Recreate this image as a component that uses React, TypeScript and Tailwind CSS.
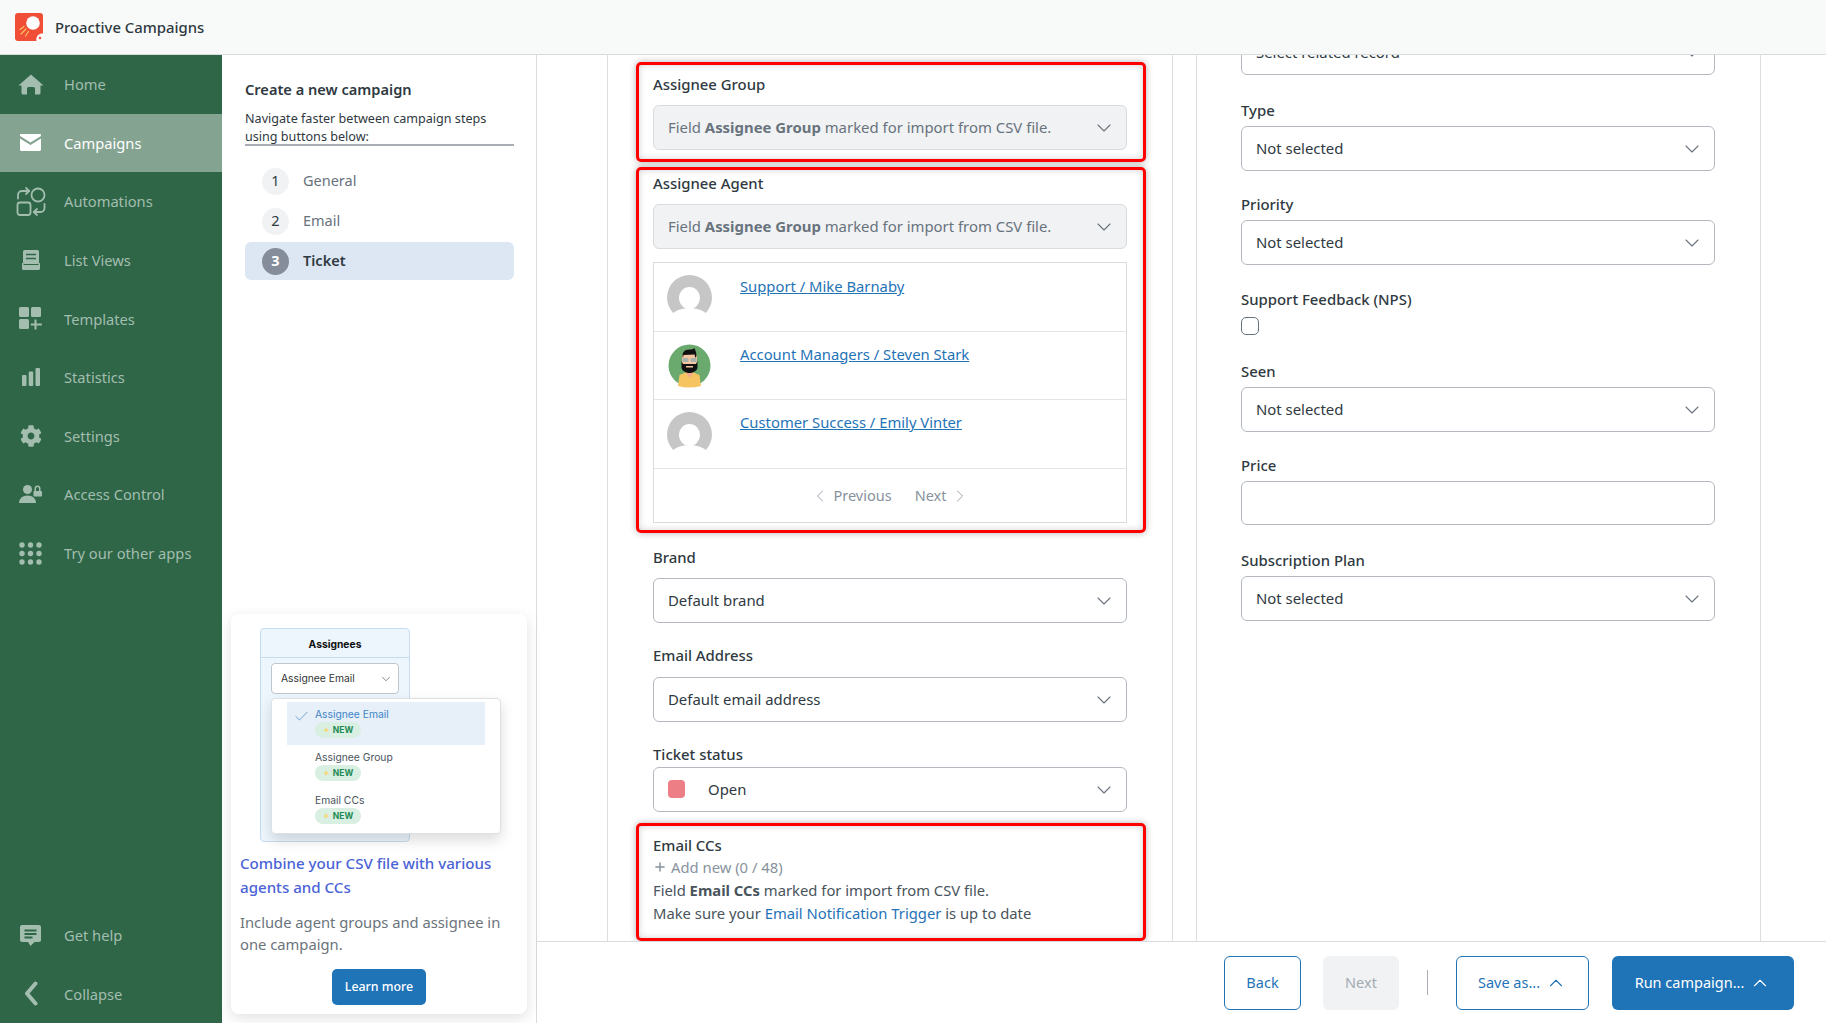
import type { ReactNode } from 'react'
import { ChevronDown, ChevronUp, ChevronLeft, ChevronRight, Check, Plus } from 'lucide-react'
import { FaCog } from 'react-icons/fa'

const HomeIcon = () => (
  <svg width="26" height="21" viewBox="0 0 26 21" fill="currentColor">
    <path d="M13 .5 25.5 11.5H22.5V19a1.5 1.5 0 0 1-1.5 1.5H17V14.5a1.5 1.5 0 0 0-1.5-1.5h-5A1.5 1.5 0 0 0 9 14.5v6H5A1.5 1.5 0 0 1 3.5 19v-7.5H.5z" />
  </svg>
)

const MailIcon = () => (
  <svg width="21" height="17" viewBox="0 0 21 17" fill="currentColor">
    <path d="M1 0h19c.6 0 1 .4 1 1v1l-10.500 6.500L0 2V1c0-.6.4-1 1-1z" />
    <path d="M0 4.500l10.500 6.500L21 4.500V15.500c0 .8-.7 1.500-1.500 1.500h-18C.7 17 0 16.300 0 15.500z" />
  </svg>
)

const AutomationIcon = () => (
  <svg width="30" height="29" viewBox="0 0 30 29" fill="none" stroke="currentColor" strokeWidth="1.800" strokeLinecap="round" strokeLinejoin="round">
    <circle cx="22" cy="8" r="6.500" />
    <rect x="1.500" y="15.500" width="13" height="12.500" rx="2.500" />
    <path d="M2 11.500V8a4 4 0 0 1 4-4h7" />
    <path d="M10 1l3.200 3L10 7" />
    <path d="M28.500 17v4a4 4 0 0 1-4 4H18" />
    <path d="M21 22l-3.200 3 3.200 3" />
  </svg>
)

const ListIcon = () => (
  <svg width="18" height="20" viewBox="0 0 18 20">
    <rect x="1" y="0" width="16" height="14" rx="1.500" fill="currentColor" />
    <path d="M4 4.500h10M4 8.500h10" stroke="#2e6647" strokeWidth="1.600" />
    <path d="M0 13h1.500v2h15v-2H18v5.500c0 .8-.7 1.500-1.500 1.500h-15C.7 20 0 19.300 0 18.500z" fill="currentColor" />
  </svg>
)

const TemplatesIcon = () => (
  <svg width="23" height="23" viewBox="0 0 23 23" fill="currentColor">
    <rect x="0" y="0" width="10" height="10" rx="1.500" />
    <rect x="12" y="0" width="10" height="10" rx="1.500" />
    <rect x="0" y="12" width="10" height="10" rx="1.500" />
    <path d="M16.500 12.500v10M11.800 17.500h11" stroke="currentColor" strokeWidth="2" />
  </svg>
)

const StatsIcon = () => (
  <svg width="18" height="18" viewBox="0 0 18 18" fill="currentColor">
    <rect x="0" y="7" width="4.500" height="11" rx="1" />
    <rect x="6.700" y="3.500" width="4.500" height="14.500" rx="1" />
    <rect x="13.500" y="0" width="4.500" height="18" rx="1" />
  </svg>
)

const AccessIcon = () => (
  <svg width="23" height="18" viewBox="0 0 23 18" fill="currentColor">
    <circle cx="8.500" cy="4.500" r="4.500" />
    <path d="M0 18c0-4.500 3.500-7.500 8.500-7.500s8.500 3 8.500 7.500z" />
    <path d="M15.500 6V3.500a3 3 0 0 1 6 0V6h.5c.6 0 1 .4 1 1v3.500c0 .6-.4 1-1 1h-6.500c-.6 0-1-.4-1-1V7c0-.6.4-1 1-1zM17 6h3V3.500a1.500 1.500 0 0 0-3 0z" fillRule="evenodd" />
  </svg>
)

const AppsIcon = () => (
  <svg width="23" height="23" viewBox="0 0 23 23" fill="currentColor">
    {[3, 11.500, 20].map((y) =>
      [3, 11.500, 20].map((x) => <circle key={`${x}-${y}`} cx={x} cy={y} r="2.700" />),
    )}
  </svg>
)

const HelpIcon = () => (
  <svg width="21" height="21" viewBox="0 0 21 21" fill="currentColor">
    <path d="M2 0h17c1.100 0 2 .9 2 2v13c0 1.100-.9 2-2 2h-4.500L10.500 21 8 17H2c-1.100 0-2-.9-2-2V2C0 .9.900 0 2 0z" />
    <path d="M4.500 5.500h12M4.500 9h12M4.500 12.500h8" stroke="#2e6647" strokeWidth="1.800" />
  </svg>
)

const CollapseIcon = () => (
  <svg width="14" height="25" viewBox="0 0 14 25" fill="none" stroke="currentColor" strokeWidth="4" strokeLinecap="round" strokeLinejoin="round">
    <path d="M11.500 2.500 3 12.500l8.500 10" />
  </svg>
)

const Logo = () => (
  <svg width="28" height="28" viewBox="0 0 28 28">
    <rect width="28" height="28" rx="3" fill="#f04e37" />
    <circle cx="18" cy="10" r="6.800" fill="#fff" />
    <path d="M5 16.500l4-3M6 21l5-5M10.500 23l3-4.500" stroke="#f8c35c" strokeWidth="1.200" strokeLinecap="round" />
    <path d="M28 20.500a6 6 0 0 0-6.500 7.500H27a1 1 0 0 0 1-1z" fill="#fff" />
    <circle cx="25" cy="25" r="1.300" fill="#f04e37" />
  </svg>
)

const BlankAvatar = () => (
  <svg width="45" height="45" viewBox="0 0 45 45" className="shrink-0">
    <circle cx="22.500" cy="22.500" r="22.500" fill="#c6c6c6" />
    <ellipse cx="22.500" cy="23" rx="10.500" ry="11" fill="#fff" />
    <ellipse cx="22.500" cy="45" rx="20" ry="12" fill="#fff" />
  </svg>
)

const StevenAvatar = () => (
  <svg width="45" height="45" viewBox="0 0 45 45" className="shrink-0">
    <circle cx="22.500" cy="22.500" r="21" fill="#6aaa6f" />
    <path d="M11 43 12.500 32l6-2.500h8l6 2.500 1.500 11q-6 1.500-12 1.500T11 43z" fill="#f6c561" />
    <path d="M18.500 29.500 22.500 35l4-5.500z" fill="#f3a88f" />
    <rect x="15" y="9" width="15" height="16" rx="5" fill="#f2c6a2" />
    <path d="M15.500 13c0-3 1-6.500 7-6.500 2 0 3.500-.5 5-1.500 0 1.500 2 3 2 8l-1 2-1-3.500-11 .5-.5 3z" fill="#111" />
    <path d="M14.500 18v6c0 3.500 4 6 8 6s8-2.500 8-6v-6l-1.500 3h-13z" fill="#111" />
    <rect x="15.500" y="15" width="6" height="4" rx="1" fill="#a9b3ad" />
    <rect x="23.500" y="15" width="6" height="4" rx="1" fill="#a9b3ad" />
    <rect x="19" y="23" width="7" height="1.500" fill="#f2c6a2" />
  </svg>
)

type NavItem = { label: string; icon: ReactNode; active?: boolean }

const topNav: NavItem[] = [
  { label: 'Home', icon: <HomeIcon /> },
  { label: 'Campaigns', icon: <MailIcon />, active: true },
  { label: 'Automations', icon: <AutomationIcon /> },
  { label: 'List Views', icon: <ListIcon /> },
  { label: 'Templates', icon: <TemplatesIcon /> },
  { label: 'Statistics', icon: <StatsIcon /> },
  { label: 'Settings', icon: <FaCog size={22} /> },
  { label: 'Access Control', icon: <AccessIcon /> },
  { label: 'Try our other apps', icon: <AppsIcon /> },
]

const bottomNav: NavItem[] = [
  { label: 'Get help', icon: <HelpIcon /> },
  { label: 'Collapse', icon: <CollapseIcon /> },
]

function NavRow({ item }: { item: NavItem }) {
  return (
    <div className={`flex h-[58.6px] items-center text-[14.7px] ${item.active ? 'bg-[#84a391] text-white' : 'text-[#a3bdaf]'}`}>
      <span className="ml-[15px] flex w-[31px] justify-center">{item.icon}</span>
      <span className="ml-[18px]">{item.label}</span>
    </div>
  )
}

function Sidebar() {
  return (
    <aside className="flex w-[222px] shrink-0 flex-col justify-between bg-[#2e6647]">
      <div>
        {topNav.map((item) => (
          <NavRow key={item.label} item={item} />
        ))}
      </div>
      <div>
        {bottomNav.map((item) => (
          <NavRow key={item.label} item={item} />
        ))}
      </div>
    </aside>
  )
}

function NewBadge() {
  return (
    <span className="flex h-[16px] w-[46px] items-center justify-center gap-[3px] rounded-full bg-[#d8efe2] text-[8.5px] font-bold text-[#1f8a55]">
      <span className="text-[8px] text-[#f6d77a]">✦</span>NEW
    </span>
  )
}

function MiniOption({ label, active }: { label: string; active?: boolean }) {
  return (
    <div className={`relative h-[43px] w-[198px] pl-[28px] pt-[5px] ${active ? 'bg-[#e7f0f9] text-[#3d85c6]' : 'text-[#49545c]'}`}>
      {active && <Check size={17} strokeWidth={1} className="absolute left-[6px] top-[6px] text-[#3d85c6]" />}
      <div className="mb-[1px] text-[10.3px] leading-[14px]">{label}</div>
      <NewBadge />
    </div>
  )
}

function PromoCard() {
  return (
    <div className="mb-[9px] ml-[9px] w-[296px] rounded-[8px] bg-white pb-[9px] pt-[14px] shadow-[0_4px_14px_rgba(0,0,0,0.12)]">
      <div className="relative ml-[29px] h-[214px] w-[150px] rounded-[4px] border border-[#c5dcf0] bg-[#edf6fd] font-['Inter',sans-serif]">
        <div className="flex h-[29px] items-center justify-center border-b border-[#c5dcf0] pt-[4px] text-[10.3px] font-bold text-[#111]">Assignees</div>
        <div className="mx-[10px] mt-[5px] flex h-[31px] items-center justify-between rounded-[4px] border border-[#c0c6cb] bg-white pl-[9px] pr-[5px] text-[10.3px] text-[#333]">
          Assignee Email
          <ChevronDown size={14} strokeWidth={1} />
        </div>
        <div className="absolute left-[10px] top-[69px] h-[136px] w-[230px] rounded-[4px] border border-[#dde1e4] bg-white pl-[15px] pt-[3px] shadow-[0_6px_14px_rgba(0,0,0,0.14)]">
          <MiniOption label="Assignee Email" active />
          <MiniOption label="Assignee Group" />
          <MiniOption label="Email CCs" />
        </div>
      </div>
      <div className="mt-[9px] px-[9px] text-[15.1px] font-medium leading-[24px] text-[#4a63d6]">Combine your CSV file with various agents and CCs</div>
      <div className="mt-[12px] px-[9px] text-[14.75px] leading-[22px] text-[#6b747c]">Include agent groups and assignee in one campaign.</div>
      <button className="mx-auto mt-[14px] block h-[36px] w-[94px] rounded-[5px] bg-[#1f73b7] text-[12.4px] font-medium text-white">Learn more</button>
    </div>
  )
}

function StepRow({ n, label, active }: { n: number; label: string; active?: boolean }) {
  return (
    <div className={`flex h-[38px] items-center gap-[14px] rounded-[6px] pl-[17px] text-[14.5px] ${active ? 'bg-[#dce7f3] font-semibold text-[#2f3941]' : 'text-[#68737d]'}`}>
      <span className={`flex h-[27px] w-[27px] items-center justify-center rounded-full ${active ? 'bg-[#858d9b] font-bold text-white' : 'bg-[#f1f2f4] text-[#2f3941]'}`}>{n}</span>
      {label}
    </div>
  )
}

function StepsPanel() {
  return (
    <div className="flex w-[315px] shrink-0 flex-col justify-between border-r border-[#d8dcde]">
      <div className="pl-[23px] pr-[22px] pt-[22px]">
        <h2 className="text-[14.6px] font-semibold leading-[24px] text-[#2f3941]">Create a new campaign</h2>
        <p className="mt-[9px] h-[36px] border-b-2 border-[#a9aeb6] text-[12.6px] leading-[18px] text-[#2f3941]">Navigate faster between campaign steps using buttons below:</p>
        <div className="mt-[16px] flex flex-col gap-[2px]">
          <StepRow n={1} label="General" />
          <StepRow n={2} label="Email" />
          <StepRow n={3} label="Ticket" active />
        </div>
      </div>
      <PromoCard />
    </div>
  )
}

function Select({ children, disabled, className = '' }: { children: ReactNode; disabled?: boolean; className?: string }) {
  return (
    <div className={`flex h-[45px] items-center justify-between rounded-[6px] border pl-[14px] pr-[10px] text-[14.9px] ${disabled ? 'border-[#d8dcde] bg-[#f1f2f4] text-[#68737d]' : 'border-[#b3b9bf] bg-white text-[#2f3941]'} ${className}`}>
      <span className="flex items-center">{children}</span>
      <ChevronDown size={24} strokeWidth={1.100} className="shrink-0 text-[#68737d]" />
    </div>
  )
}

function Label({ children, className = '' }: { children: ReactNode; className?: string }) {
  return <div className={`h-[20px] text-[14.9px] font-medium leading-[18px] text-[#2f3941] ${className}`}>{children}</div>
}

function RedBox({ children, className = '' }: { children: ReactNode; className?: string }) {
  return <div className={`rounded-[5px] border-[3px] border-[#f00] pl-[14px] pr-[16px] shadow-[0_0_7px_rgba(0,0,0,0.3),inset_0_0_7px_rgba(0,0,0,0.18)] ${className}`}>{children}</div>
}

function ImportSelect({ className = '' }: { className?: string }) {
  return (
    <Select disabled className={className}>
      <span>
        Field <b className="font-bold">Assignee Group</b> marked for import from CSV file.
      </span>
    </Select>
  )
}

function AgentRow({ label, avatar, top, linkTop }: { label: string; avatar: ReactNode; top: string; linkTop: string }) {
  return (
    <div className={`flex h-[68.500px] items-start border-b border-[#e2e4e6] pl-[13px] ${top}`}>
      {avatar}
      <a className={`ml-[28px] text-[14.8px] leading-[20px] text-[#1f73b7] underline ${linkTop}`}>{label}</a>
    </div>
  )
}

function LeftColumn() {
  return (
    <section className="h-full w-[566px] shrink-0 overflow-hidden border-x border-[#dcdfe1] pl-[28px] pr-[26px] pt-[7px]">
      <RedBox className="h-[100px] pt-[10px]">
        <Label>Assignee Group</Label>
        <ImportSelect className="mt-[10px] h-[44px]" />
      </RedBox>
      <RedBox className="mt-[5px] h-[366px] pt-[4px]">
        <Label>Assignee Agent</Label>
        <ImportSelect className="mt-[10px]" />
        <div className="mt-[13px] h-[261px] border border-[#d8dcde]">
          <AgentRow label="Support / Mike Barnaby" avatar={<BlankAvatar />} top="pt-[12px]" linkTop="mt-[1px]" />
          <AgentRow label="Account Managers / Steven Stark" avatar={<StevenAvatar />} top="pt-[11px]" linkTop="mt-[1px]" />
          <AgentRow label="Customer Success / Emily Vinter" avatar={<BlankAvatar />} top="pt-[12px]" linkTop="mt-0" />
          <div className="flex h-[54px] items-center justify-center text-[14.5px] text-[#87929d]">
            <ChevronLeft size={20} strokeWidth={1} className="mr-[4px]" />
            Previous
            <span className="ml-[23px]">Next</span>
            <ChevronRight size={20} strokeWidth={1} className="ml-[4px]" />
          </div>
        </div>
      </RedBox>
      <div className="pl-[17px] pr-[19px]">
        <Label className="mt-[15px]">Brand</Label>
        <Select className="mt-[10px]">Default brand</Select>
        <Label className="mt-[23px]">Email Address</Label>
        <Select className="mt-[11px]">Default email address</Select>
        <Label className="mt-[23px]">Ticket status</Label>
        <Select className="mt-[2px]">
          <span className="mr-[23px] h-[18px] w-[17px] rounded-[4px] bg-[#ee7e85]" />
          Open
        </Select>
      </div>
      <RedBox className="mt-[11px] h-[118px] pt-[10px] text-[14.8px] leading-[20px] text-[#49545c]">
        <Label>Email CCs</Label>
        <div className="mt-[1px] flex items-center text-[#87929d]">
          <Plus size={14} strokeWidth={2.5} className="mr-[4px]" />
          Add new (0 / 48)
        </div>
        <div className="mt-[3px]">
          Field <b className="font-bold">Email CCs</b> marked for import from CSV file.
        </div>
        <div className="mt-[3px]">
          Make sure your <span className="text-[#1f73b7]">Email Notification Trigger</span> is up to date
        </div>
      </RedBox>
    </section>
  )
}

function RightColumn() {
  return (
    <section className="h-full w-[565px] shrink-0 overflow-hidden border-x border-[#dcdfe1] pl-[44px] pr-[45px]">
      <Select className="-mt-[25px]">Select related record</Select>
      <Label className="mt-[26px]">Type</Label>
      <Select className="mt-[5px]">Not selected</Select>
      <Label className="mt-[24px]">Priority</Label>
      <Select className="mt-[5px]">Not selected</Select>
      <Label className="mt-[25px]">Support Feedback (NPS)</Label>
      <div className="mt-[7px] h-[18px] w-[18px] rounded-[5px] border border-[#68737d]" />
      <Label className="mt-[27px]">Seen</Label>
      <Select className="mt-[5px]">Not selected</Select>
      <Label className="mt-[24px]">Price</Label>
      <div className="mt-[5px] h-[44px] rounded-[6px] border border-[#b3b9bf]" />
      <Label className="mt-[26px]">Subscription Plan</Label>
      <Select className="mt-[5px]">Not selected</Select>
    </section>
  )
}

function Footer() {
  return (
    <footer className="flex h-[82px] shrink-0 items-center justify-end border-t border-[#d8dcde] bg-white pr-[32px] text-[14.5px]">
      <button className="h-[54px] w-[77px] rounded-[6px] border border-[#1f73b7] text-[#1f73b7]">Back</button>
      <button className="ml-[22px] h-[54px] w-[76px] rounded-[6px] bg-[#f1f2f4] text-[#a3abb2]">Next</button>
      <span className="ml-[28px] h-[25px] w-px bg-[#a9aeb6]" />
      <button className="ml-[28px] flex h-[54px] w-[133px] items-center justify-center gap-[5px] rounded-[6px] border border-[#1f73b7] text-[#1f73b7]">
        Save as...
        <ChevronUp size={22} strokeWidth={1.200} />
      </button>
      <button className="ml-[23px] flex h-[54px] w-[182px] items-center justify-center gap-[5px] rounded-[6px] bg-[#1f73b7] text-white">
        Run campaign...
        <ChevronUp size={22} strokeWidth={1.200} />
      </button>
    </footer>
  )
}

export default function App() {
  return (
    <div className="flex h-screen w-full flex-col overflow-hidden bg-white font-['Noto_Sans',sans-serif]">
      <header className="flex h-[55px] shrink-0 items-center border-b border-[#d8dcde] bg-[#f8f9f9] pl-[15px]">
        <Logo />
        <span className="ml-[12px] mt-[1px] text-[14.85px] font-medium text-[#2f3941]">Proactive Campaigns</span>
      </header>
      <div className="flex min-h-0 flex-1">
        <Sidebar />
        <StepsPanel />
        <main className="flex min-w-0 flex-1 flex-col">
          <div className="flex min-h-0 flex-1 gap-[23px] overflow-hidden pl-[70px]">
            <LeftColumn />
            <RightColumn />
          </div>
          <Footer />
        </main>
      </div>
    </div>
  )
}
